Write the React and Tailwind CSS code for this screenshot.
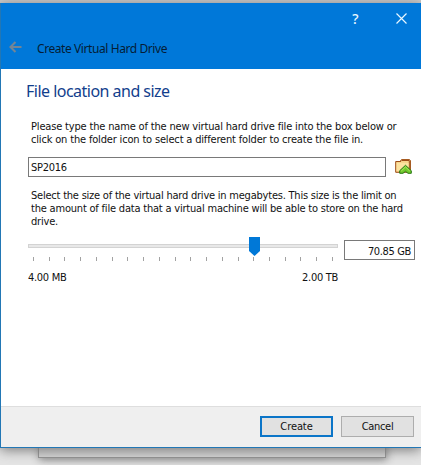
const ticks = Array.from({ length: 20 }, (_, i) => i);

function BackArrow() {
  return (
    <svg width="13" height="12" viewBox="0 0 13 12" fill="none" stroke="#728595" strokeWidth="2.1">
      <path d="M12.5 6H1.5M6.5 1L1.5 6l5 5" />
    </svg>
  );
}

function CloseIcon() {
  return (
    <svg width="11" height="11" viewBox="0 0 11 11" fill="none" stroke="#e8f7ff" strokeWidth="1.2">
      <path d="M.5.5l10 10M10.5.5l-10 10" />
    </svg>
  );
}

function FolderIcon() {
  return (
    <svg width="17" height="16" viewBox="0 0 17 16">
      <path d="M5.5 3V1.5l1-1h8l1 1V11h-10z" fill="#f5d58f" stroke="#a65b22" />
      <path d="M.7 13.3V2.5h5l1-1h7.6v11.8z" fill="#f8d58c" stroke="#9c4c18" />
      <path d="M1.7 12V4h11.8v4L8 12z" fill="#fde3a0" />
      <path d="M10.5 6.3l5.8 5.4v2.6h-3.3l-2.5-2-2.5 2H4.7v-2.6z" fill="#70c92c" stroke="#287815" strokeLinejoin="round" />
      <path d="M6.3 12l4.2-4.1 4.2 4.1" fill="none" stroke="#b4ec62" />
    </svg>
  );
}

function Header() {
  return (
    <header className="h-[66px] bg-[#0078d9]">
      <div className="flex h-[31px] items-center justify-end pr-[14px]">
        <span className="mr-[37px] w-[7px] text-center font-['Noto_Sans',sans-serif] text-[14px] font-medium leading-[31px] text-[#e8f7ff]">?</span>
        <CloseIcon />
      </div>
      <div className="flex h-[28px] items-center pl-2">
        <span className="-mt-[2px]"><BackArrow /></span>
        <span className="mt-px ml-[15px] font-['Noto_Sans',sans-serif] text-[12px] leading-4 tracking-[-0.42px] text-[#051d35]">Create Virtual Hard Drive</span>
      </div>
    </header>
  );
}

function Slider() {
  return (
    <div className="relative w-[310px]">
      <div className="mt-[7px] h-1 border border-[#d3d3d3] bg-[#e8e8e8]" />
      <div className="mt-[9px] ml-[5px] flex w-[300px] justify-between">
        {ticks.map((tick) => <i key={tick} className="h-[4px] w-px bg-[#a2a2a2]" />)}
      </div>
      <svg className="absolute left-[221px] top-0" width="11" height="19" viewBox="0 0 11 19">
        <path d="M0 0h11v14l-5.5 5L0 14z" fill="#0078d7" />
      </svg>
      <div className="mt-[10px] flex justify-between leading-[14px] tracking-[-0.3px]">
        <span>4.00 MB</span>
        <span>2.00 TB</span>
      </div>
    </div>
  );
}

export default function App() {
  return (
    <div className="relative h-[465px] w-[421px] overflow-hidden bg-[#e5e5e5] pt-[3px] font-['DejaVu_Sans_Condensed','DejaVu_Sans',sans-serif] text-[11px] text-[#111]">
      <div className="absolute inset-x-0 top-0 h-[3px] bg-[#cbcbcb]" />
      <div className="absolute left-[38px] top-[430px] h-[28px] w-[348px] border border-[#929292] bg-[#d5d5d5] shadow-[1px_2px_8px_#888]" />
      <main className="relative flex h-[445px] w-[421px] flex-col border-b border-l border-[#2277b5] bg-white shadow-[0_2px_12px_#777]">
        <Header />
        <section className="h-[337px] pl-[25px]">
          <h1 className="pt-[11px] font-['Noto_Sans',sans-serif] text-[16px] leading-[22px] tracking-[-0.52px] text-[#123e8c]">File location and size</h1>
          <div className="mt-[18px] pl-[5px] leading-[13px] whitespace-nowrap">
            <p className="tracking-[-0.17px]">Please type the name of the new virtual hard drive file into the box below or</p>
            <p className="tracking-[-0.17px]">click on the folder icon to select a different folder to create the file in.</p>
          </div>
          <div className="mt-[11px] flex items-center pl-[2px]">
            <div className="h-5 w-[358px] border border-[#797979] pl-[2px] leading-[20px] tracking-[-0.3px]">SP2016</div>
            <div className="ml-[9px]"><FolderIcon /></div>
          </div>
          <div className="mt-[12px] pl-[5px] leading-[13px] whitespace-nowrap">
            <p className="tracking-[-0.22px]">Select the size of the virtual hard drive in megabytes. This size is the limit on</p>
            <p className="tracking-[-0.2px]">the amount of file data that a virtual machine will be able to store on the hard</p>
            <p className="tracking-[-0.2px]">drive.</p>
          </div>
          <div className="mt-[9px] flex pl-[2px]">
            <Slider />
            <div className="mt-[3px] ml-[6px] h-5 w-[71px] border border-[#797979] pr-[3px] text-right leading-[21px] tracking-[-0.35px]">70.85 GB</div>
          </div>
        </section>
        <footer className="flex h-[41px] justify-end gap-2 border-t border-[#dedede] bg-[#efefef] pt-[9px] pr-[7px]">
          <button className="h-[21px] w-[73px] border-2 border-[#0b75c8] bg-[#e1e1e1] leading-[18px] tracking-[-0.1px]">Create</button>
          <button className="h-[21px] w-[73px] border border-[#adadad] bg-[#e1e1e1] leading-[20px] tracking-[-0.3px]">Cancel</button>
        </footer>
      </main>
    </div>
  );
}
